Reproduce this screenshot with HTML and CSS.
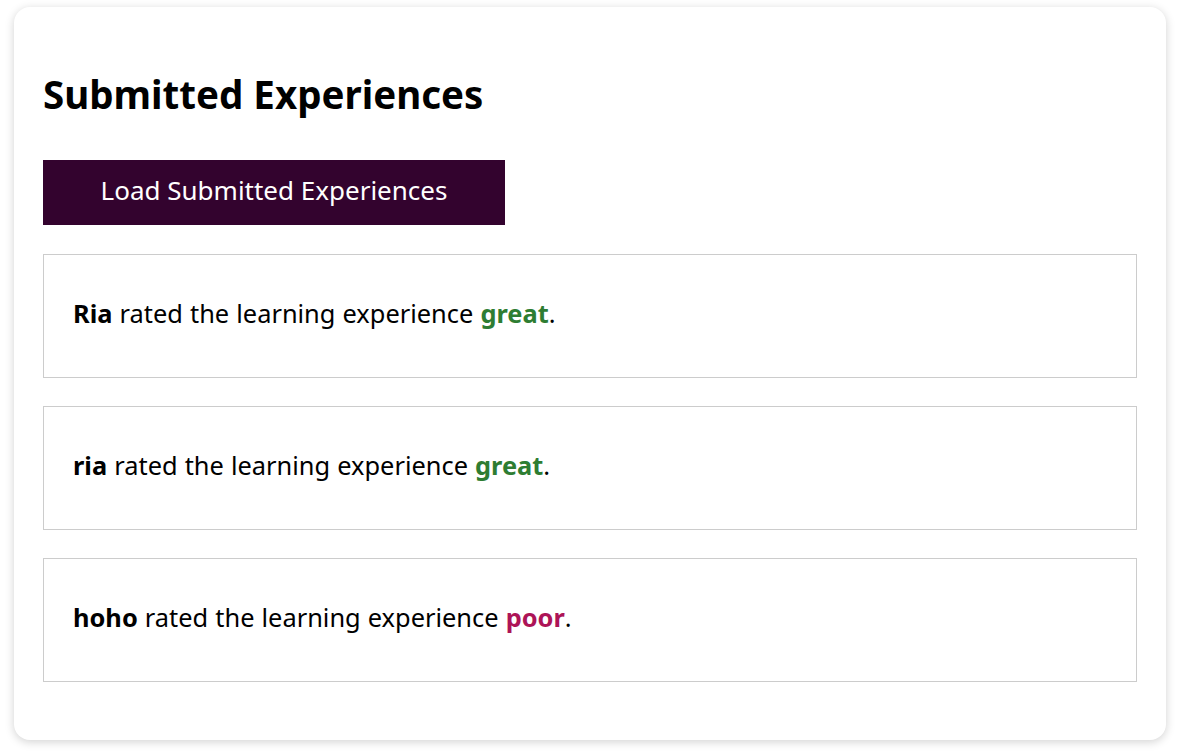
FILE: index.html
```html
<!DOCTYPE html>
<html lang="en">
<head>
    <meta charset="UTF-8">
    <meta name="viewport" content="width=device-width, initial-scale=1.0">
    <title>Submitted Experiences</title>
    <link rel="stylesheet" href="styles.css">
</head>
<body>

<div class="card">
    <h2 class="title">Submitted Experiences</h2>

    <button class="button" id="load-button">Load Submitted Experiences</button>

    <div class="list">
        <div class="entry">
            <p><strong>Ria</strong> rated the learning experience <span class="rating great">great</span>.</p>
        </div>
        <div class="entry">
            <p><strong>ria</strong> rated the learning experience <span class="rating great">great</span>.</p>
        </div>
        <div class="entry">
            <p><strong>hoho</strong> rated the learning experience <span class="rating poor">poor</span>.</p>
        </div>
    </div>
</div>

</body>
</html>
```

FILE: styles.css
```css
/* Design général */
body {
    font-family: 'Noto Sans', 'Noto Sans CJK KR', sans-serif;
    background: #fff;
    color: #000;
    margin: 0;
    padding: 7px 18px 12px 14px;
}

.card {
    background-color: white;
    border-radius: 16px;
    box-shadow: 0 2px 10px rgba(0, 0, 0, 0.18);
    padding: 29px 29px 30px 29px;
}

.title {
    font-size: 38.5px;
    font-weight: bold;
    margin: 35px 0 43px;
    line-height: 1.2;
}

/* Bouton */
.button {
    display: block;
    background-color: #33032e;
    color: white;
    font-family: inherit;
    font-size: 26px;
    padding: 0 0 6px;
    width: 462px;
    height: 65px;
    white-space: nowrap;
    border: none;
    cursor: pointer;
}

.list {
    margin-top: 29px;
}

.entry {
    border: 1px solid #ccc;
    height: 122px;
    padding: 0 29px;
    display: flex;
    align-items: center;
    font-size: 25.4px;
    margin-bottom: 28px;
}

.entry p {
    margin: 0 0 6px;
    word-spacing: 0.5px;
}

.rating {
    font-weight: bold;
}

.great {
    color: #2e7d32;
}

.poor {
    color: #ad1457;
}
```
